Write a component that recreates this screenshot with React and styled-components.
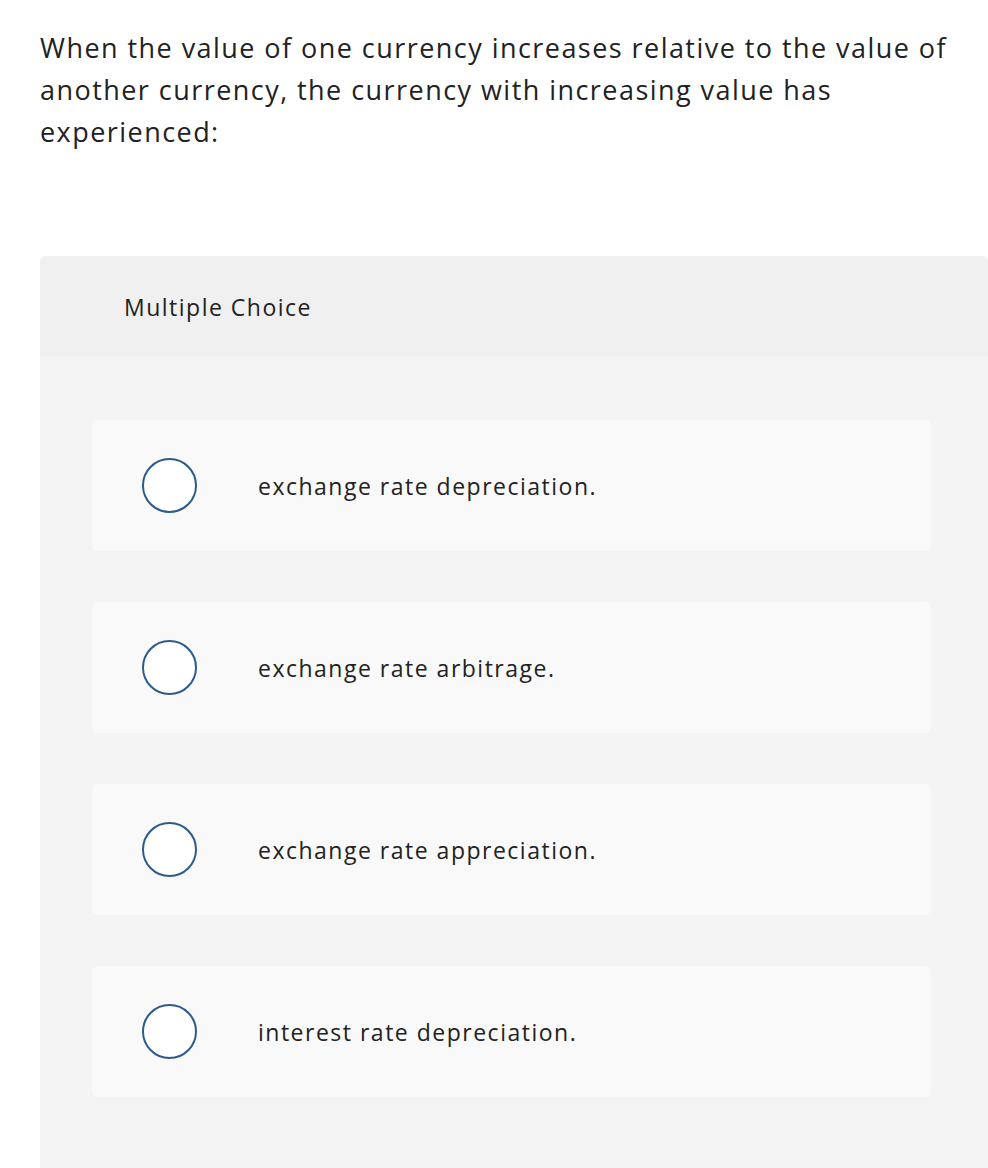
import React from "react";
import styled, { createGlobalStyle } from "styled-components";

const GlobalStyle = createGlobalStyle`
  html, body {
    margin: 0;
    padding: 0;
    background: #ffffff;
  }
  body {
    font-family: "Open Sans", "Lato", sans-serif;
    color: #222222;
  }
`;

const options = [
  "exchange rate depreciation.",
  "exchange rate arbitrage.",
  "exchange rate appreciation.",
  "interest rate depreciation.",
];

const App = () => {
  return (
    <>
      <GlobalStyle />
      <Page>
        <Question>
          When the value of one currency increases relative to the value of
          <br />
          another currency, the currency with increasing value has
          <br />
          experienced:
        </Question>
        <Panel>
          <PanelHeader>Multiple Choice</PanelHeader>
          <PanelBody>
            {options.map((text) => (
              <Option key={text}>
                <Radio />
                <OptionText>{text}</OptionText>
              </Option>
            ))}
          </PanelBody>
        </Panel>
      </Page>
    </>
  );
};

export default App;

const Page = styled.div`
  box-sizing: border-box;
  height: 1168px;
  padding: 27px 0 0 40px;
  display: flex;
  flex-direction: column;
  overflow: hidden;
`;

const Question = styled.p`
  margin: 0;
  font-size: 27px;
  line-height: 42px;
  letter-spacing: 1.45px;
  color: #222222;
  white-space: nowrap;
`;

const Panel = styled.div`
  flex: 1;
  margin-top: 103px;
  border-radius: 6px 6px 0 0;
  overflow: hidden;
  background: #f4f4f4;
`;

const PanelHeader = styled.div`
  height: 100px;
  box-sizing: border-box;
  padding: 36px 0 0 84px;
  background: #f0f0f0;
  font-size: 23px;
  line-height: 30px;
  letter-spacing: 1.5px;
  color: #222222;
`;

const PanelBody = styled.div`
  padding: 64px 57px 0 52px;
  display: flex;
  flex-direction: column;
  gap: 51px;
`;

const Option = styled.div`
  height: 131px;
  display: flex;
  align-items: center;
  padding-left: 50px;
  background: #f9f9f9;
  border-radius: 6px;
`;

const Radio = styled.span`
  width: 51px;
  height: 51px;
  border: 2px solid #2d5a8e;
  border-radius: 50%;
  background: #ffffff;
  flex-shrink: 0;
`;

const OptionText = styled.span`
  margin-left: 61px;
  font-size: 23px;
  line-height: 30px;
  letter-spacing: 1.5px;
  color: #222222;
`;
